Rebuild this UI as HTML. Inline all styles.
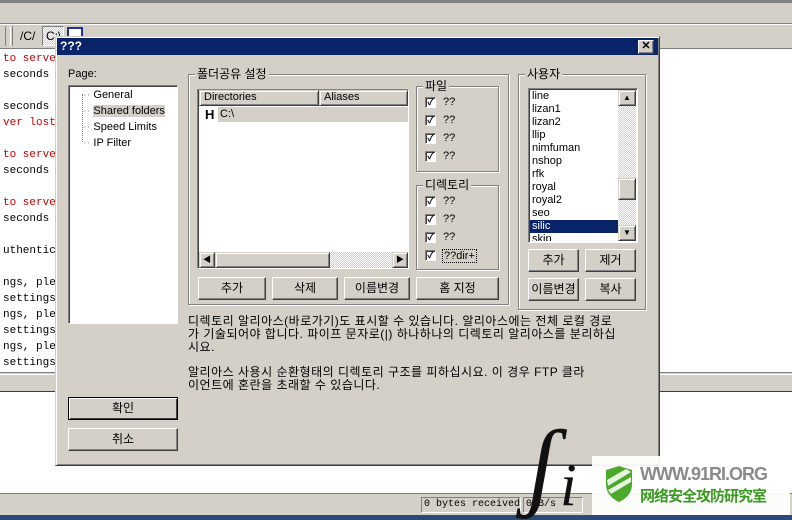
<!DOCTYPE html>
<html><head><meta charset="utf-8"><style>
*{margin:0;padding:0;box-sizing:border-box}
body{width:792px;height:520px;overflow:hidden;position:relative;background:#d4d0c8;font-family:"Liberation Sans","Noto Sans CJK KR",sans-serif;font-size:11px;color:#000}
.a{position:absolute}
.w{background:#fff}
.mono{font-family:"Liberation Mono",monospace;font-size:11px;white-space:pre;line-height:16px}
.red{color:#c00000}
.sunk{border:1px solid;border-color:#808080 #fff #fff #808080;box-shadow:inset 1px 1px 0 #404040}
.btn{position:absolute;background:#d4d0c8;border:1px solid;border-color:#fff #404040 #404040 #fff;box-shadow:inset -1px -1px 0 #808080;text-align:center;font-size:12px}
.grp{position:absolute;border:1px solid #808080;box-shadow:1px 1px 0 #fff,inset 1px 1px 0 #fff}
.grp>span{position:absolute;top:-8px;left:6px;background:#d4d0c8;padding:0 2px;font-size:12px;line-height:14px}
.cb{position:absolute;width:11px;height:11px;background:#fff;border:1px solid;border-color:#808080 #fff #fff #808080;box-shadow:inset 1px 1px 0 #404040;font-size:9px;line-height:9px;text-align:center;font-weight:bold}
.lbl{position:absolute;font-size:11px}
.sb{background:#d4d0c8;border:1px solid;border-color:#d4d0c8 #404040 #404040 #d4d0c8;box-shadow:inset 1px 1px 0 #fff,inset -1px -1px 0 #808080;position:absolute}
.hatch{background:repeating-conic-gradient(#d4d0c8 0 25%,#fff 0 50%) 0 0/2px 2px}
</style></head><body>
<div class="a" style="left:0;top:0;width:792px;height:3px;background:#808080"></div>
<div class="a" style="left:0;top:23px;width:792px;height:1px;background:#808080"></div>
<div class="a" style="left:0;top:24px;width:792px;height:1px;background:#fff"></div>
<div class="a" style="left:0;top:26px;width:6px;height:20px;border-right:1px solid #808080"></div>
<div class="a" style="left:10px;top:26px;width:3px;height:20px;border-left:1px solid #fff;border-right:1px solid #808080"></div>
<div class="a" style="left:20px;top:29px;font-size:12px">/C/</div>
<div class="a hatch" style="left:42px;top:26px;width:22px;height:20px;border:1px solid;border-color:#808080 #fff #fff #808080;font-size:12px;padding:2px 0 0 3px">C:\</div>
<div class="a" style="left:67px;top:27px;width:16px;height:12px;border:2px solid #2030a0;background:#fff"></div>
<div class="a" style="left:0;top:48px;width:792px;height:1px;background:#808080"></div>
<div class="a w" style="left:0;top:49px;width:792px;height:323px"></div>
<div class="a" style="left:0;top:372px;width:792px;height:3px;border-top:1px solid #808080;border-bottom:1px solid #fff;background:#d4d0c8"></div>
<div class="a" style="left:0;top:391px;width:792px;height:1px;background:#404040"></div>
<div class="a w" style="left:0;top:392px;width:792px;height:101px"></div>
<div class="a" style="left:0;top:493px;width:792px;height:1px;background:#808080"></div>
<div class="a" style="left:0;top:515px;width:792px;height:5px;background:#2c4a78"></div>
<div class="a mono" style="left:421px;top:497px;border:1px solid;border-color:#808080 #fff #fff #808080;width:100px;height:16px;line-height:14px;padding-left:2px;font-size:10px">0 bytes received</div>
<div class="a mono" style="left:523px;top:497px;border:1px solid;border-color:#808080 #fff #fff #808080;width:60px;height:16px;line-height:14px;padding-left:2px;font-size:10px">0 B/s</div>
<div class="a mono" style="left:3px;top:51px"><span class="red">to server</span>
seconds

seconds
<span class="red">ver lost...</span>

<span class="red">to server</span>
seconds

<span class="red">to server</span>
seconds

uthenticat

ngs, pleas
settings
ngs, pleas
settings
ngs, pleas
settings</div>

<!-- dialog -->
<div class="a" style="left:55px;top:36px;width:605px;height:430px;background:#d4d0c8;border:1px solid;border-color:#d4d0c8 #404040 #404040 #d4d0c8;box-shadow:inset 1px 1px 0 #fff,inset -1px -1px 0 #808080"></div>
<div class="a" style="left:57px;top:38px;width:601px;height:17px;background:#0a246a;color:#fff;font-weight:bold;font-size:12px;padding:1px 3px">???</div>
<div class="btn" style="left:638px;top:40px;width:16px;height:14px;font-size:11px;line-height:11px;font-weight:bold">✕</div>
<div class="a" style="left:68px;top:68px;font-size:11px">Page:</div>
<div class="a w sunk" style="left:68px;top:85px;width:110px;height:239px"></div>
<div class="a" style="left:82px;top:94px;width:1px;height:48px;border-left:1px dotted #808080"></div>
<div class="a" style="left:83px;top:87px;line-height:16px;font-size:11px">
<div><span style="color:#999">··</span> General</div>
<div><span style="color:#999">··</span> <span style="background:#d4d0c8">Shared folders</span></div>
<div><span style="color:#999">··</span> Speed Limits</div>
<div><span style="color:#999">··</span> IP Filter</div></div>
<div class="btn" style="left:68px;top:397px;width:110px;height:23px;border:1px solid #000;box-shadow:inset 1px 1px 0 #fff,inset -1px -1px 0 #404040;line-height:20px">확인</div>
<div class="btn" style="left:68px;top:428px;width:110px;height:23px;line-height:20px">취소</div>

<div class="grp" style="left:188px;top:74px;width:321px;height:231px"><span>폴더공유 설정</span></div>
<div class="a w sunk" style="left:197px;top:89px;width:212px;height:180px"></div>
<div class="sb" style="left:199px;top:90px;width:120px;height:16px;padding-left:4px;line-height:13px">Directories</div>
<div class="sb" style="left:319px;top:90px;width:89px;height:16px;padding-left:4px;line-height:13px">Aliases</div>
<div class="a" style="left:205px;top:107px;font-weight:bold;font-size:13px">H</div>
<div class="a" style="left:218px;top:107px;width:190px;height:15px;background:#d4d0c8;padding-left:2px;line-height:14px">C:\</div>
<div class="a" style="left:199px;top:252px;width:209px;height:16px;background:#d4d0c8"></div>
<div class="sb" style="left:199px;top:252px;width:16px;height:16px;font-size:8px;text-align:center;line-height:13px">◀</div>
<div class="sb" style="left:215px;top:252px;width:115px;height:16px"></div>
<div class="a hatch" style="left:330px;top:252px;width:62px;height:16px"></div>
<div class="sb" style="left:392px;top:252px;width:16px;height:16px;font-size:8px;text-align:center;line-height:13px">▶</div>

<div class="grp" style="left:416px;top:86px;width:83px;height:86px"><span>파일</span></div>
<div class="grp" style="left:416px;top:185px;width:83px;height:85px"><span>디렉토리</span></div>
<div class="cb" style="left:425px;top:97px">✓</div><div class="lbl" style="left:443px;top:96px">??</div>
<div class="cb" style="left:425px;top:115px">✓</div><div class="lbl" style="left:443px;top:114px">??</div>
<div class="cb" style="left:425px;top:133px">✓</div><div class="lbl" style="left:443px;top:132px">??</div>
<div class="cb" style="left:425px;top:151px">✓</div><div class="lbl" style="left:443px;top:150px">??</div>
<div class="cb" style="left:425px;top:196px">✓</div><div class="lbl" style="left:443px;top:195px">??</div>
<div class="cb" style="left:425px;top:214px">✓</div><div class="lbl" style="left:443px;top:213px">??</div>
<div class="cb" style="left:425px;top:232px">✓</div><div class="lbl" style="left:443px;top:231px">??</div>
<div class="cb" style="left:425px;top:250px">✓</div><div class="lbl" style="left:442px;top:249px;border:1px dotted #000;padding:0 1px">??dir+</div>

<div class="btn" style="left:198px;top:277px;width:68px;height:23px;line-height:20px">추가</div>
<div class="btn" style="left:272px;top:277px;width:66px;height:23px;line-height:20px">삭제</div>
<div class="btn" style="left:344px;top:277px;width:66px;height:23px;line-height:20px">이름변경</div>
<div class="btn" style="left:416px;top:277px;width:83px;height:23px;line-height:20px">홈 지정</div>

<div class="grp" style="left:518px;top:74px;width:128px;height:236px"><span>사용자</span></div>
<div class="a w sunk" style="left:528px;top:88px;width:110px;height:155px;overflow:hidden"></div>
<div class="a" style="left:530px;top:90px;width:88px;height:151px;overflow:hidden;line-height:13px;font-size:11px">
<div style="padding-left:2px">line</div><div style="padding-left:2px">lizan1</div><div style="padding-left:2px">lizan2</div><div style="padding-left:2px">llip</div><div style="padding-left:2px">nimfuman</div><div style="padding-left:2px">nshop</div><div style="padding-left:2px">rfk</div><div style="padding-left:2px">royal</div><div style="padding-left:2px">royal2</div><div style="padding-left:2px">seo</div><div style="padding-left:2px;background:#0a246a;color:#fff">silic</div><div style="padding-left:2px">skip</div></div>
<div class="a hatch" style="left:618px;top:90px;width:18px;height:151px"></div>
<div class="sb" style="left:618px;top:90px;width:18px;height:16px;font-size:8px;text-align:center;line-height:13px">▲</div>
<div class="sb" style="left:618px;top:178px;width:18px;height:22px"></div>
<div class="sb" style="left:618px;top:225px;width:18px;height:16px;font-size:8px;text-align:center;line-height:13px">▼</div>
<div class="btn" style="left:528px;top:249px;width:51px;height:23px;line-height:20px">추가</div>
<div class="btn" style="left:585px;top:249px;width:51px;height:23px;line-height:20px">제거</div>
<div class="btn" style="left:528px;top:278px;width:51px;height:23px;line-height:20px">이름변경</div>
<div class="btn" style="left:585px;top:278px;width:51px;height:23px;line-height:20px">복사</div>

<div class="a" style="left:188px;top:315px;width:470px;font-size:12px;line-height:13px;letter-spacing:.5px;white-space:nowrap">디렉토리 알리아스(바로가기)도 표시할 수 있습니다. 알리아스에는 전체 로컬 경로<br>가 기술되어야 합니다. 파이프 문자로(|) 하나하나의 디렉토리 알리아스를 분리하십<br>시요.</div>
<div class="a" style="left:188px;top:366px;width:470px;font-size:12px;line-height:13px;letter-spacing:.5px;white-space:nowrap">알리아스 사용시 순환형태의 디렉토리 구조를 피하십시요. 이 경우 FTP 클라<br>이언트에 혼란을 초래할 수 있습니다.</div>

<!-- watermark -->
<div class="a" style="left:528px;top:415px;font-family:'Liberation Serif',serif;font-style:italic;font-size:100px;line-height:100px;color:#111">ʃ</div>
<div class="a" style="left:560px;top:455px;font-family:'Liberation Serif',serif;font-style:italic;font-size:60px;line-height:60px;color:#111">i</div>
<div class="a" style="left:592px;top:456px;width:198px;height:59px;background:rgba(255,255,255,0.93)"></div>
<svg class="a" style="left:604px;top:466px" width="30" height="36" viewBox="0 0 30 36"><path d="M2 4 L15 0 L28 4 L28 18 Q28 30 15 36 Q2 30 2 18Z" fill="#4aa82a"/><path d="M3 14 L22 3 L27 6 L4 20Z M4 24 L27 11 L27 16 L7 28Z" fill="#e8f4e0"/></svg>
<div class="a" style="left:640px;top:464px;font-weight:bold;font-size:18px;color:#8a8a8a;letter-spacing:-1px;white-space:nowrap">WWW.91RI.ORG</div>
<div class="a" style="left:640px;top:487px;font-weight:bold;font-size:15px;color:#3a9a20;font-family:'Noto Sans CJK SC',sans-serif;line-height:18px;white-space:nowrap;letter-spacing:-1px">网络安全攻防研究室</div>
</body></html>
